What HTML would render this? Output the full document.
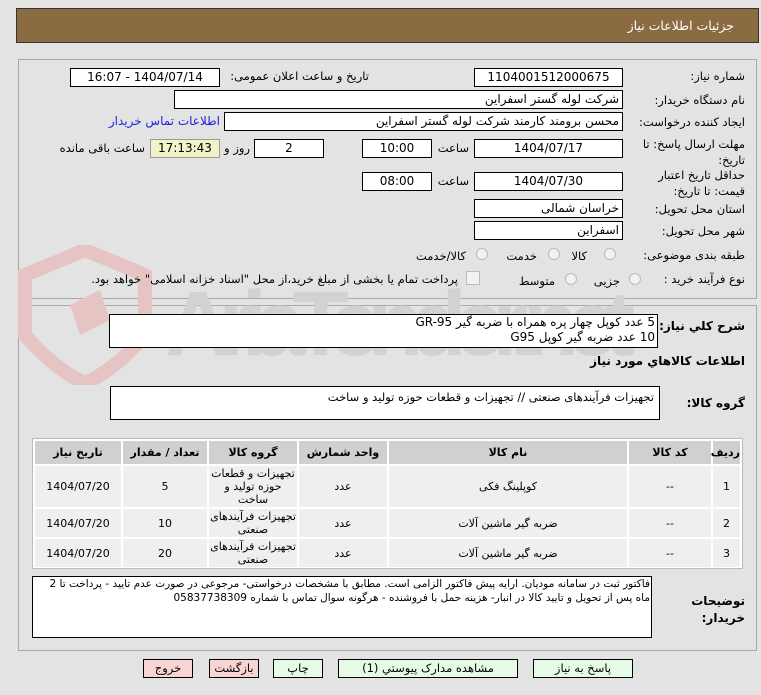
<!DOCTYPE html>
<html><head><meta charset="utf-8"><style>
body{margin:0;width:761px;height:695px;background:#e3e3e3;font-family:"DejaVu Sans","Liberation Sans",sans-serif;font-size:11px;color:#000;position:relative;overflow:hidden}
.a{position:absolute}
.hdr{left:16px;top:8px;width:743px;height:35px;background:#8b6b42;border:1px solid #333;box-sizing:border-box}
.panel{border:1px solid #a8a8a8;box-sizing:border-box}
.box{position:absolute;background:#fff;border:1px solid #000;box-sizing:border-box;direction:rtl;text-align:center;font-size:12px;line-height:17px;white-space:nowrap;overflow:hidden}
.l{position:absolute;direction:rtl;white-space:nowrap;font-size:11.5px;line-height:15px}
.r{right:16px;text-align:right}
.radio{position:absolute;width:12px;height:12px;border-radius:50%;border:1px solid #bbb;background:#f2f2f2;box-sizing:border-box}
table{border-collapse:separate;border-spacing:2px;font-size:11px;direction:rtl;table-layout:fixed}
th{background:#d0d0d0;height:23px;font-weight:bold;text-align:center;padding:0}
td{background:#efefef;text-align:center;line-height:13px;padding:0;font-size:11px}
.btn{position:absolute;top:659px;height:19px;border:1px solid #000;box-sizing:border-box;text-align:center;font-size:11.5px;line-height:17px;direction:rtl}
.g{background:#e6fbe6}.p{background:#f8d4d4}
</style></head><body>
<div class="a hdr"></div>
<div class="l" style="right:27px;top:18px;color:#fff;font-size:12.5px">جزئیات اطلاعات نیاز</div>

<div class="a panel" style="left:18px;top:59px;width:739px;height:240px"></div>
<div class="a panel" style="left:18px;top:305px;width:739px;height:346px"></div>

<svg class="a" style="left:15px;top:245px" width="640" height="140">
<path d="M10 30 L70 5 L130 30 L130 90 Q100 125 70 138 Q40 125 10 90 Z" fill="none" stroke="#e6c4c4" stroke-width="14"/>
<path d="M55 60 L85 45 L95 75 L65 90 Z" fill="#e6c4c4"/>
<text x="150" y="110" font-family="Liberation Sans" font-size="92" font-weight="bold" fill="#d2d2d2" textLength="470">AriaTender.net</text>
</svg>

<div class="l r" style="top:69px">شماره نیاز:</div>
<div class="box" style="left:474px;top:68px;width:149px;height:19px">1104001512000675</div>
<div class="l" style="right:392px;top:69px">تاریخ و ساعت اعلان عمومی:</div>
<div class="box" style="left:70px;top:68px;width:150px;height:19px">1404/07/14 - 16:07</div>

<div class="l r" style="top:93px">نام دستگاه خریدار:</div>
<div class="box" style="left:174px;top:90px;width:449px;height:19px;text-align:right;padding-right:3px">شرکت لوله گستر اسفراین</div>

<div class="l r" style="top:115px">ایجاد کننده درخواست:</div>
<div class="box" style="left:224px;top:112px;width:399px;height:19px;text-align:right;padding-right:3px">محسن برومند کارمند شرکت لوله گستر اسفراین</div>
<div class="l" style="right:541px;top:114px;color:#2020e0;font-size:12px">اطلاعات تماس خریدار</div>

<div class="l r" style="top:136px;line-height:16px">مهلت ارسال پاسخ: تا<br>تاریخ:</div>
<div class="box" style="left:474px;top:139px;width:149px;height:19px">1404/07/17</div>
<div class="l" style="right:292px;top:141px">ساعت</div>
<div class="box" style="left:362px;top:139px;width:70px;height:19px">10:00</div>
<div class="box" style="left:254px;top:139px;width:70px;height:19px">2</div>
<div class="l" style="right:511px;top:141px">روز و</div>
<div class="box" style="left:150px;top:139px;width:70px;height:19px;background:#f3f3c8;border-color:#999">17:13:43</div>
<div class="l" style="right:616px;top:141px">ساعت باقی مانده</div>

<div class="l r" style="top:167px;line-height:16px">حداقل تاریخ اعتبار<br>قیمت: تا تاریخ:</div>
<div class="box" style="left:474px;top:172px;width:149px;height:19px">1404/07/30</div>
<div class="l" style="right:292px;top:174px">ساعت</div>
<div class="box" style="left:362px;top:172px;width:70px;height:19px">08:00</div>

<div class="l r" style="top:202px">استان محل تحویل:</div>
<div class="box" style="left:474px;top:199px;width:149px;height:19px;text-align:right;padding-right:3px">خراسان شمالی</div>
<div class="l r" style="top:224px">شهر محل تحویل:</div>
<div class="box" style="left:474px;top:221px;width:149px;height:19px;text-align:right;padding-right:3px">اسفراین</div>

<div class="l r" style="top:248px">طبقه بندی موضوعی:</div>
<div class="radio" style="left:604px;top:248px"></div><div class="l" style="right:174px;top:249px">کالا</div>
<div class="radio" style="left:548px;top:248px"></div><div class="l" style="right:224px;top:249px">خدمت</div>
<div class="radio" style="left:476px;top:248px"></div><div class="l" style="right:295px;top:249px">کالا/خدمت</div>

<div class="l r" style="top:272px">نوع فرآیند خرید :</div>
<div class="radio" style="left:629px;top:273px"></div><div class="l" style="right:141px;top:274px">جزیی</div>
<div class="radio" style="left:565px;top:273px"></div><div class="l" style="right:206px;top:274px">متوسط</div>
<div class="a" style="left:466px;top:271px;width:12px;height:12px;border:1px solid #bbb;background:#f2f2f2"></div>
<div class="l" style="right:303px;top:272px">پرداخت تمام یا بخشی از مبلغ خرید،از محل "اسناد خزانه اسلامی" خواهد بود.</div>

<div class="l r" style="top:319px;font-weight:bold;font-size:12px">شرح کلي نیاز:</div>
<div class="box" style="left:109px;top:314px;width:549px;height:34px;text-align:right;padding-right:2px;font-size:12px;line-height:15px">5 عدد کوپل چهار پره همراه با ضربه گیر GR-95<br>10 عدد ضربه گیر کوپل G95</div>
<div class="l r" style="top:354px;font-weight:bold;font-size:12px">اطلاعات کالاهاي مورد نیاز</div>
<div class="l r" style="top:396px;font-weight:bold;font-size:12px">گروه کالا:</div>
<div class="box" style="left:110px;top:386px;width:550px;height:34px;text-align:right;padding-right:5px;padding-top:2px;font-size:11.5px">تجهیزات فرآیندهای صنعتی // تجهیزات و قطعات حوزه تولید و ساخت</div>

<div class="a" style="left:32px;top:438px;width:711px;height:131px;border:1px solid #bbb;box-sizing:border-box;background:#fff;overflow:hidden">
<table style="width:709px">
<colgroup><col style="width:27px"><col style="width:82px"><col style="width:238px"><col style="width:88px"><col style="width:88px"><col style="width:84px"><col></colgroup>
<tr><th>ردیف</th><th>کد کالا</th><th>نام کالا</th><th>واحد شمارش</th><th>گروه کالا</th><th>تعداد / مقدار</th><th>تاریخ نیاز</th></tr>
<tr style="height:41px"><td>1</td><td>--</td><td>کوپلینگ فکی</td><td>عدد</td><td>تجهیزات و قطعات حوزه تولید و ساخت</td><td>5</td><td>1404/07/20</td></tr>
<tr style="height:28px"><td>2</td><td>--</td><td>ضربه گیر ماشین آلات</td><td>عدد</td><td>تجهیزات فرآیندهای صنعتی</td><td>10</td><td>1404/07/20</td></tr>
<tr style="height:28px"><td>3</td><td>--</td><td>ضربه گیر ماشین آلات</td><td>عدد</td><td>تجهیزات فرآیندهای صنعتی</td><td>20</td><td>1404/07/20</td></tr>
</table></div>

<div class="l r" style="top:593px;font-weight:bold;font-size:12px;line-height:17px">توضیحات<br>خریدار:</div>
<div class="box" style="left:32px;top:576px;width:620px;height:62px;text-align:right;padding-right:1px;white-space:normal;font-size:10.5px;line-height:14px">فاکتور ثبت در سامانه مودیان. ارایه پیش فاکتور الزامی است. مطابق با مشخصات درخواستی- مرجوعی در صورت عدم تایید - پرداخت تا 2 ماه پس از تحویل و تایید کالا در انبار- هزینه حمل با فروشنده - هرگونه سوال تماس با شماره 05837738309</div>

<div class="btn g" style="left:533px;width:100px">پاسخ به نیاز</div>
<div class="btn g" style="left:338px;width:180px">مشاهده مدارک پیوستي (1)</div>
<div class="btn g" style="left:273px;width:50px">چاپ</div>
<div class="btn p" style="left:209px;width:50px">بازگشت</div>
<div class="btn p" style="left:143px;width:50px">خروج</div>
</body></html>
